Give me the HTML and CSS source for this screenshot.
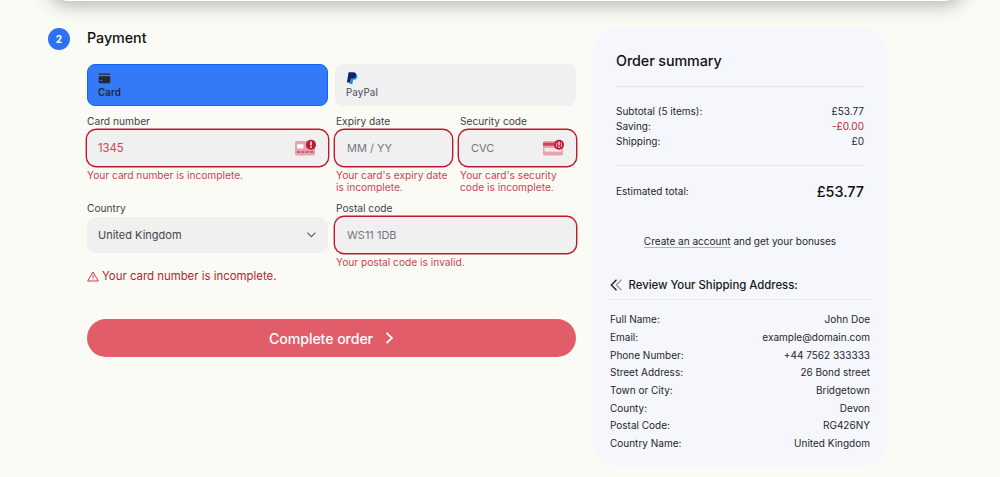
FILE: index.html
```html
<!DOCTYPE html>
<html lang="en">
<head>
<meta charset="utf-8">
<title>Checkout</title>
<link rel="stylesheet" href="styles.css">
</head>
<body>
<section class="previous-step"></section>
<main class="checkout">
  <div class="step-number">2</div>
  <form class="payment">
    <h2 class="payment-title">Payment</h2>
    <div class="tabs">
      <div class="tab tab-active">
        <svg class="tab-icon" width="13" height="14" viewBox="0 0 13 14"><path fill="#26272d" d="M1.6 2.4h9.8c.5 0 .9.3.9.9v.4H.7v-.4c0-.6.4-.9.9-.9zM.7 5.2h11.6v5.9c0 .7-.5 1.1-1.1 1.1H1.8c-.6 0-1.1-.4-1.1-1.1z"/><path fill="#3479f7" d="M2.3 9h2v1.1h-2z"/></svg>
        <span>Card</span>
      </div>
      <div class="tab">
        <svg class="tab-icon" width="13" height="14" viewBox="0 0 13 14"><path fill="#2790d2" d="M4.2 3.5h6.2c1 .8 1.1 2.1.7 3.2-.5 1.5-1.7 2.1-3.3 2.1h-.7l-.7 4.2H3.5z"/><path fill="#17246b" d="M2.6 1.2h4.5c2.2 0 3.5 1 3.1 3.1-.4 2.2-1.8 3.1-4 3.1H4.7l-.8 4.2H.9z"/></svg>
        <span>PayPal</span>
      </div>
    </div>
    <div class="fields">
      <label class="field field-wide">
        <span class="label">Card number</span>
        <span class="input invalid"><span class="bad-value">1345</span>
          <svg class="card-icon" width="22" height="18" viewBox="0 0 22 18"><rect x="0" y="3" width="20" height="14.5" rx="1.8" fill="#e4a3af"/><rect x="2" y="6.3" width="6.5" height="4.2" rx=".8" fill="#fff"/><path stroke="#c9435d" stroke-width="1.4" stroke-dasharray="3 1.4" d="M2 14h16.5"/><circle cx="16" cy="6.8" r="5" fill="#c01834"/><path stroke="#fff" stroke-width="1.5" d="M16 3.5v4M16 8.5v1.5"/></svg>
        </span>
        <span class="error">Your card number is incomplete.</span>
      </label>
      <label class="field field-inset">
        <span class="label">Expiry date</span>
        <span class="input invalid"><span>MM / YY</span></span>
        <span class="error">Your card's expiry date<br>is incomplete.</span>
      </label>
      <label class="field field-inset">
        <span class="label">Security code</span>
        <span class="input invalid"><span>CVC</span>
          <svg class="card-icon" width="22" height="18" viewBox="0 0 22 18"><rect x="0" y="3" width="20" height="14.5" rx="1.6" fill="#e4a3af"/><path fill="#c9435d" d="M0 4.7h20v3H0z"/><path fill="#f7e6e9" d="M1.5 10h17v3.6h-17z"/><circle cx="16" cy="6.8" r="5" fill="#c01834"/><path stroke="#fff" stroke-width="1.2" d="M16 3.5v4M16 8.5v1.5"/><path fill="none" stroke="#fff" stroke-width=".7" d="M14 4.5q-1.3 2.3 0 4.6M18 4.5q1.3 2.3 0 4.6"/></svg>
        </span>
        <span class="error">Your card's security<br>code is incomplete.</span>
      </label>
      <label class="field field-wide">
        <span class="label">Country</span>
        <span class="input select"><span>United Kingdom</span>
          <svg width="11" height="8" viewBox="0 0 11 8"><path fill="none" stroke="#565a62" stroke-width="1.1" d="M1.4 1.7l4 4 4-4"/></svg>
        </span>
      </label>
      <label class="field field-half field-inset">
        <span class="label">Postal code</span>
        <span class="input invalid"><span>WS11 1DB</span></span>
        <span class="error">Your postal code is invalid.</span>
      </label>
    </div>
    <div class="alert">
      <svg width="12" height="11" viewBox="0 0 12 11"><path fill="none" stroke="#bd1e31" stroke-width=".85" stroke-linejoin="round" d="M6 .9L11.3 10H.7z"/><path stroke="#bd1e31" stroke-width=".85" d="M6 3.8v3.1M6 7.8v.9"/></svg>
      <span>Your card number is incomplete.</span>
    </div>
    <button class="submit" type="button"><span>Complete order</span>
      <svg width="9" height="14" viewBox="0 0 9 14"><path fill="none" stroke="#fff" stroke-width="1.8" d="M1.5 1.8L6.9 7l-5.4 5.2"/></svg>
    </button>
  </form>
  <aside class="summary">
    <h2 class="summary-title">Order summary</h2>
    <dl class="totals">
      <div class="row"><dt>Subtotal (5 items):</dt><dd>£53.77</dd></div>
      <div class="row"><dt>Saving:</dt><dd class="saving">-£0.00</dd></div>
      <div class="row"><dt>Shipping:</dt><dd>£0</dd></div>
    </dl>
    <div class="row total"><span>Estimated total:</span><strong>£53.77</strong></div>
    <p class="account"><a>Create an account</a> and get your bonuses</p>
    <div class="address">
      <h3 class="address-title">
        <svg width="13" height="12" viewBox="0 0 13 12"><path fill="none" stroke="#999ca3" stroke-width="1.3" d="M11.4.8L6.3 6l5.1 5.2"/><path fill="none" stroke="#17191d" stroke-width="1.3" d="M6.5.8L1.3 6l5.2 5.2"/></svg>
        <span>Review Your Shipping Address:</span>
      </h3>
      <dl class="details">
        <div class="row"><dt>Full Name:</dt><dd>John Doe</dd></div>
        <div class="row"><dt>Email:</dt><dd>example@domain.com</dd></div>
        <div class="row"><dt>Phone Number:</dt><dd>+44 7562 333333</dd></div>
        <div class="row"><dt>Street Address:</dt><dd>26 Bond street</dd></div>
        <div class="row"><dt>Town or City:</dt><dd>Bridgetown</dd></div>
        <div class="row"><dt>County:</dt><dd>Devon</dd></div>
        <div class="row"><dt>Postal Code:</dt><dd>RG426NY</dd></div>
        <div class="row"><dt>Country Name:</dt><dd>United Kingdom</dd></div>
      </dl>
    </div>
  </aside>
</main>
</body>
</html>
```

FILE: styles.css
```css
* { box-sizing: border-box; }
body { margin: 0; height: 477px; overflow: hidden; background: #fafbf5; font-family: Inter, "Liberation Sans", sans-serif; color: #24262b; }
h2, h3, p, dl, dd { margin: 0; font-weight: 500; }
svg { display: block; flex: none; }
.previous-step { width: 916px; height: 40px; margin: -39px 0 0 48px; border-radius: 20px; background: #fff; box-shadow: 0 4px 18px rgba(45, 50, 35, .35); }
.checkout { display: grid; grid-template-columns: 39px 490px 294px; align-items: start; padding: 27px 0 0 48px; column-gap: 0; }
.step-number { display: flex; align-items: center; justify-content: center; width: 22px; height: 22px; border-radius: 50%; background: #2d70f5; color: #fff; font-size: 10px; font-weight: 700; }
.payment { width: 489px; }
.payment-title { height: 36px; color: #111; font-size: 14.3px; line-height: 20px; letter-spacing: -.05px; }
.tabs { display: grid; grid-template-columns: 241px 241px; gap: 7px; }
.tab { height: 42px; padding: 6px 11px; border-radius: 8px; background: #f0f0f1; color: #5d606a; font-size: 9.7px; font-weight: 500; line-height: 14px; letter-spacing: .12px; }
.tab-active { border: 1px solid #0c67f5; padding: 5px 10px; background: #3479f7; color: #26272d; font-weight: 600; }
.tab-icon { height: 16px; }
.fields { display: grid; grid-template-columns: 241px 117px 117px; gap: 0 7px; padding-top: 9px; }
.field { display: block; height: 87px; }
.field-half { grid-column: span 2; }
.field-inset .label, .field-inset .error { padding-left: 1px; }
.label { display: block; height: 15px; color: #3f424a; font-size: 10.2px; line-height: 13px; white-space: nowrap; }
.input { display: flex; align-items: center; justify-content: space-between; height: 36px; padding: 0 11px; border-radius: 9px; background: #f0f0f0; color: #757780; font-size: 11px; }
.field-inset .input { padding-left: 12px; }
.invalid { box-shadow: 0 0 0 1.4px #c2182e; }
.bad-value { color: #ce4356; font-size: 11.3px; }
.card-icon { margin-bottom: 2px; }
.select { color: #42454d; }
.error { display: block; padding-top: 3px; color: #ca4353; font-size: 10.2px; line-height: 12px; white-space: nowrap; }
.alert { display: flex; align-items: center; gap: 3px; height: 16px; margin-top: -21px; color: #b91c2e; font-size: 11.4px; }
.submit { display: flex; align-items: center; justify-content: center; gap: 12px; width: 489px; height: 38px; margin-top: 35px; padding: 0; border: 0; border-radius: 19px; background: #e25d6a; color: #fff; font: 500 14.2px Inter, sans-serif; letter-spacing: -.1px; }
.summary { width: 294px; height: 438px; margin-left: 16px; padding: 21px 17px 0 17px; border-radius: 23px; background: #f6f7fc; font-size: 10px; }
.summary-title { height: 38px; margin: 0 6px; border-bottom: 1px solid #e5e6ea; color: #111; font-size: 14.3px; line-height: 23px; letter-spacing: -.08px; }
.totals { height: 79px; margin: 0 6px; padding-top: 17px; border-bottom: 1px solid #e5e6ea; }
.row { display: flex; align-items: center; justify-content: space-between; line-height: 15px; }
.row dt, .row dd { font-weight: 400; }
.row .saving { color: #c21f2f; }
.total { height: 50px; margin: 0 6px; }
.total strong { color: #111; font-size: 14.4px; font-weight: 500; }
.account { height: 44px; margin-top: 17px; text-align: center; font-weight: 400; line-height: 16px; }
.account a { border-bottom: 1.5px solid #b1b4be; }
.address-title { display: flex; align-items: center; gap: 5.5px; height: 23px; padding-bottom: 6px; border-bottom: 1px solid #e5e6ea; color: #181a20; font-size: 11.4px; letter-spacing: -.02px; }
.details { padding-top: 11px; }
.details .row { height: 17.7px; }
```
